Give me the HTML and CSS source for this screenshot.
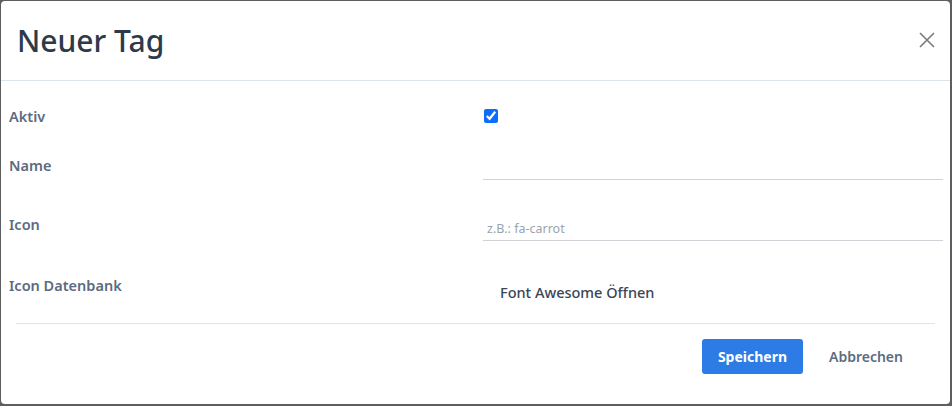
FILE: index.html
```html
<!DOCTYPE html>
<html lang="de">
<head>
<meta charset="utf-8">
<title>Neuer Tag</title>
<link rel="stylesheet" href="styles.css">
</head>
<body>
<div class="modal">
  <div class="modal-header">
    <h1 class="modal-title">Neuer Tag</h1>
    <button class="close" aria-label="Schließen">
      <svg width="16" height="16" viewBox="0 0 16 16"><path d="M1 1 L15 15 M15 1 L1 15" stroke="#7a7a7a" stroke-width="1.6" fill="none"/></svg>
    </button>
  </div>
  <div class="modal-body">
    <div class="row row-aktiv">
      <label class="label">Aktiv</label>
      <div class="field"><input type="checkbox" class="check" checked></div>
    </div>
    <div class="row row-name">
      <label class="label">Name</label>
      <div class="field"><div class="input"></div></div>
    </div>
    <div class="row row-icon">
      <label class="label">Icon</label>
      <div class="field"><div class="input"><span class="placeholder">z.B.: fa-carrot</span></div></div>
    </div>
    <div class="row row-db">
      <label class="label">Icon Datenbank</label>
      <div class="field"><span class="link">Font Awesome Öffnen</span></div>
    </div>
  </div>
  <div class="modal-footer">
    <button class="btn btn-primary">Speichern</button>
    <button class="btn btn-link">Abbrechen</button>
  </div>
</div>
</body>
</html>
```
FILE: styles.css
```css
* { box-sizing: border-box; }
html, body { margin: 0; padding: 0; }
body {
  background: #5e5e5e;
  font-family: "Noto Sans", "Open Sans", sans-serif;
  width: 952px;
  height: 406px;
  padding: 1px 2px 2px 1px;
}
.modal {
  background: #fff;
  border-radius: 4px;
  height: 403px;
  display: flex;
  flex-direction: column;
}
.modal-header {
  height: 80px;
  flex: 0 0 80px;
  border-bottom: 1px solid #dbe5ee;
  display: flex;
  align-items: center;
  justify-content: space-between;
  padding: 0 15px 0 16px;
}
.modal-title {
  margin: 0;
  font-size: 30px;
  font-weight: 500;
  color: #2d3a4b;
  padding-bottom: 1px;
}
.close {
  background: none;
  border: 0;
  padding: 0;
  width: 16px;
  height: 16px;
  margin-bottom: 1px;
  cursor: pointer;
}
.close svg { display: block; }
.modal-body {
  padding: 0 7px 0 8px;
  flex: 0 0 auto;
}
.row { display: flex; }
.label {
  width: 474px;
  font-size: 14.5px;
  font-weight: 600;
  color: #5b6b80;
  line-height: 20px;
}
.field { flex: 1; }
.row-aktiv { height: 59px; }
.row-aktiv .label { padding-top: 25px; }
.check {
  margin: 28px 0 0 1px;
  width: 14px;
  height: 14px;
  accent-color: #0d6efd;
}
.row-name { height: 40px; }
.row-name .label { padding-top: 15px; }
.input {
  height: 40px;
  border-bottom: 1px solid #cfd3d8;
  display: flex;
  align-items: flex-end;
  padding: 0 0 2px 4px;
}
.row-icon { height: 61px; }
.row-icon .label { padding-top: 34px; }
.row-icon .input { height: 61px; }
.placeholder {
  font-size: 12.5px;
  color: #9aa4b0;
  line-height: 18px;
}
.row-db { height: 82px; }
.row-db .label { padding-top: 34px; }
.link {
  display: inline-block;
  font-size: 14.5px;
  font-weight: 500;
  color: #3b4555;
  padding: 41px 0 0 17px;
  line-height: 20px;
}
.modal-footer {
  margin: 0 15px;
  border-top: 1px solid #dbe5ee;
  display: flex;
  justify-content: flex-end;
  align-items: flex-start;
  padding-top: 15px;
  padding-right: 20px;
  gap: 8px;
}
.btn {
  font-family: inherit;
  font-size: 14px;
  font-weight: 700;
  border: 0;
  height: 35px;
  border-radius: 3px;
  cursor: pointer;
}
.btn-primary {
  background: #2d7be5;
  color: #fff;
  width: 101px;
}
.btn-link {
  background: none;
  color: #5b6b80;
  padding: 0 12px 0 18px;
  font-weight: 600;
}
```
